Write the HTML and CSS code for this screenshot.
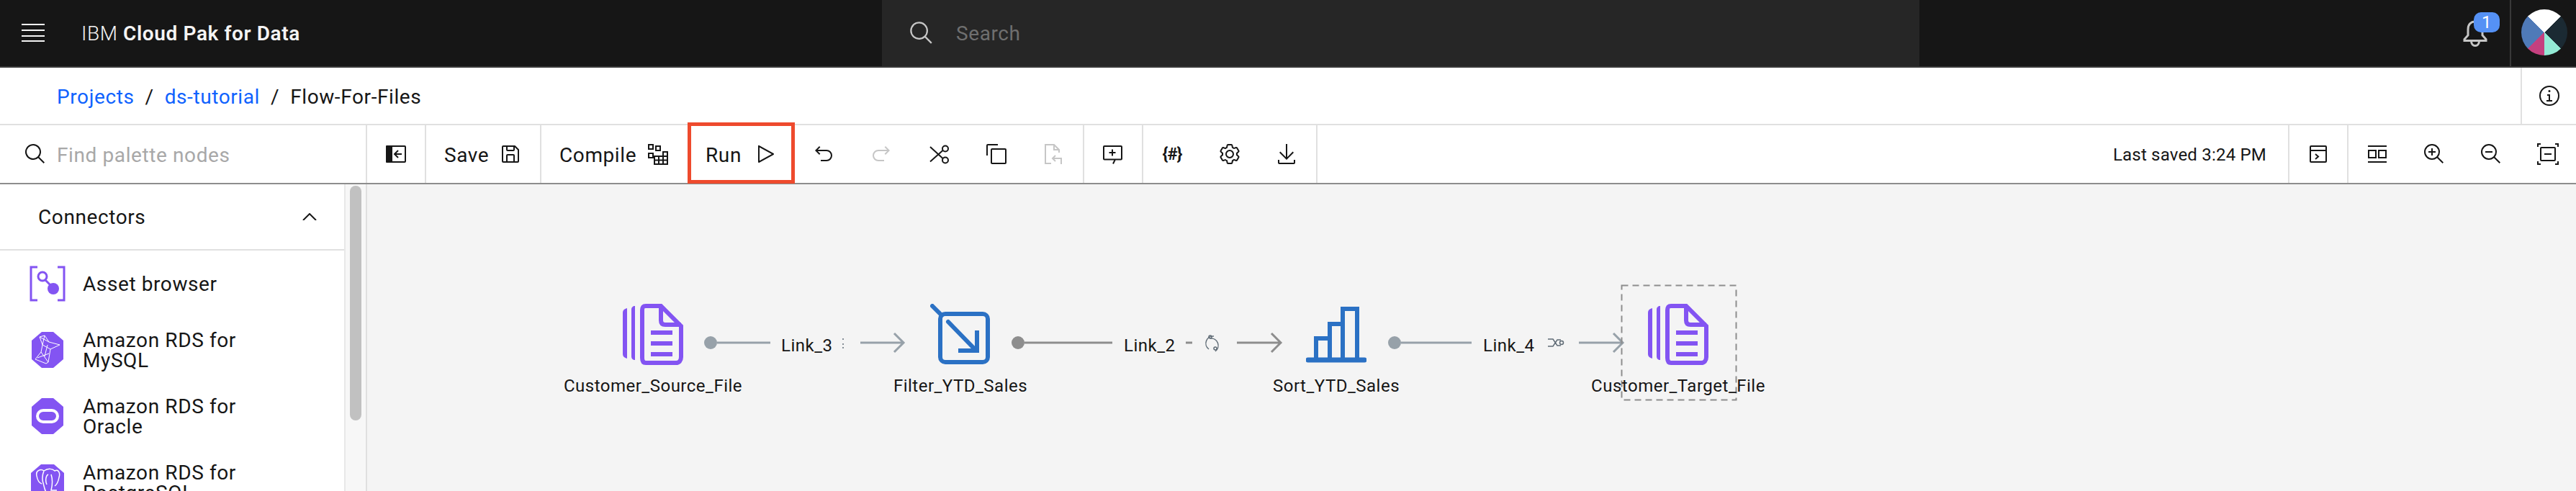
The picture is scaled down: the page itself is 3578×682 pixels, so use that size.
FILE: index.html
```html
<!DOCTYPE html>
<html lang="en">
<head>
    <meta charset="UTF-8">
    <title>Flow-For-Files</title>
    <link rel="stylesheet" href="styles.css">
</head>
<body>
    <header class="top-bar">
        <div class="top-left">
            <div class="menu-btn">
                <svg width="32" height="26" viewBox="0 0 32 26" fill="#f4f4f4"><rect y="0" width="32" height="2"/><rect y="8" width="32" height="2"/><rect y="16" width="32" height="2"/><rect y="23" width="32" height="2"/></svg>
            </div>
            <div class="product">IBM <strong>Cloud Pak for Data</strong></div>
        </div>
        <div class="top-search">
            <svg class="icon search-icon" viewBox="0 0 32 32" fill="#c6c6c6"><path d="M29 27.586l-7.552-7.552a11.018 11.018 0 10-1.414 1.414L27.586 29zM4 13a9 9 0 119 9 9.01 9.01 0 01-9-9z"/></svg>
            <span>Search</span>
        </div>
        <div class="top-right">
            <div class="bell">
                <svg width="34" height="38" viewBox="0 0 34 38" fill="none" stroke="#c6c6c6" stroke-width="3"><path d="M2 28.500V26.500L7 21V13C7 6 11 2 17 2S27 6 27 13V21L32 26.500V28.500Z"/><path d="M11.500 29C11.500 33 14 35.500 17 35.500S22.500 33 22.500 29"/></svg>
                <span class="badge">1</span>
            </div>
            <div class="avatar-box"><div class="avatar"></div></div>
        </div>
    </header>

    <nav class="crumbs">
        <div class="crumb-list">
            <a href="#">Projects</a>
            <span class="sep">/</span>
            <a href="#">ds-tutorial</a>
            <span class="sep">/</span>
            <span>Flow-For-Files</span>
        </div>
        <div class="info-btn">
            <svg class="icon" viewBox="0 0 32 32" fill="#161616"><path d="M17 22v-8h-4v2h2v6h-3v2h8v-2h-3z"/><path d="M16 8a1.500 1.500 0 101.500 1.500A1.500 1.500 0 0016 8z"/><path d="M16 30a14 14 0 1114-14 14 14 0 01-14 14zm0-26a12 12 0 1012 12A12 12 0 0016 4z"/></svg>
        </div>
    </nav>

    <div class="toolbar">
        <div class="palette-search">
            <svg class="icon" viewBox="0 0 32 32" fill="#161616"><path d="M29 27.586l-7.552-7.552a11.018 11.018 0 10-1.414 1.414L27.586 29zM4 13a9 9 0 119 9 9.01 9.01 0 01-9-9z"/></svg>
            <span>Find palette nodes</span>
        </div>
        <div class="tool toggle">
            <svg class="icon" viewBox="0 0 32 32"><path fill="#161616" d="M3 4H11V28H3a1 1 0 01-1-1V5a1 1 0 011-1z"/><path fill="none" stroke="#161616" stroke-width="2" d="M11 5H28a1 1 0 011 1V26a1 1 0 01-1 1H11"/><path fill="none" stroke="#161616" stroke-width="2" d="M24 16H15M19 11L14 16L19 21"/></svg>
        </div>
        <div class="text-tool save">
            <span>Save</span>
            <svg class="icon" viewBox="0 0 32 32" fill="#161616"><path d="M27.710 9.290l-5-5A1 1 0 0022 4H6a2 2 0 00-2 2v20a2 2 0 002 2h20a2 2 0 002-2V10a1 1 0 00-.290-.710zM12 6h8v4h-8zm8 20h-8v-8h8zm2 0v-8a2 2 0 00-2-2h-8a2 2 0 00-2 2v8H6V6h4v4a2 2 0 002 2h8a2 2 0 002-2V6.410l4 4V26z"/></svg>
        </div>
        <div class="text-tool compile">
            <span>Compile</span>
            <svg class="icon" viewBox="0 0 32 32" fill="none" stroke="#161616" stroke-width="2"><path d="M3 3h6v6H3zM13 5h6v6h-6zM3 15h6v6H3zM11 19h18v11H11zM23 13h6v17h-6zM17 19v11M11 24.500h18"/></svg>
        </div>
        <div class="text-tool run">
            <span>Run</span>
            <svg class="icon" viewBox="0 0 32 32" fill="#161616"><path d="M7 28a1 1 0 01-1-1V5a1 1 0 011.480-.880l20 11a1 1 0 010 1.760l-20 11A1 1 0 017 28zM8 6.690v18.620L24.930 16z"/></svg>
        </div>
        <div class="tool">
            <svg class="icon" viewBox="0 0 32 32" fill="#161616"><path d="M20 10H7.815l3.587-3.586L10 5l-6 6 6 6 1.402-1.415L7.818 12H20a6 6 0 010 12h-8v2h8a8 8 0 000-16z"/></svg>
        </div>
        <div class="tool">
            <svg class="icon" viewBox="0 0 32 32" fill="#c6c6c6"><path d="M12 10h12.185l-3.587-3.586L22 5l6 6-6 6-1.402-1.415L24.182 12H12a6 6 0 000 12h8v2h-8a8 8 0 010-16z"/></svg>
        </div>
        <div class="tool">
            <svg class="icon" viewBox="0 0 32 32" fill="none" stroke="#161616" stroke-width="2"><circle cx="25" cy="8.500" r="4"/><circle cx="25" cy="24.500" r="4"/><path d="M4 6L21.500 22M4 26.500L21.500 11"/></svg>
        </div>
        <div class="tool">
            <svg class="icon" viewBox="0 0 32 32" fill="#161616"><path d="M28 10v18H10V10h18m0-2H10a2 2 0 00-2 2v18a2 2 0 002 2h18a2 2 0 002-2V10a2 2 0 00-2-2z"/><path d="M4 18H2V4a2 2 0 012-2h14v2H4z"/></svg>
        </div>
        <div class="tool end">
            <svg class="icon" viewBox="0 0 32 32" fill="none" stroke="#c6c6c6" stroke-width="2"><path d="M13 29H5V3H17L24 10V14M17 3V10H24M27 30V22H15M19 18L15 22L19 26"/></svg>
        </div>
        <div class="tool end">
            <svg class="icon" viewBox="0 0 32 32" fill="none" stroke="#161616" stroke-width="2"><path d="M18 23.500H28a1 1 0 001-1V6a1 1 0 00-1-1H5a1 1 0 00-1 1V22.500a1 1 0 001 1H20L17 29.500"/><path d="M16 9.500V18.500M11.500 14H20.500"/></svg>
        </div>
        <div class="tool"><span class="code-icon">{#}</span></div>
        <div class="tool">
            <svg class="icon" viewBox="0 0 32 32" fill="#161616"><path d="M27 16.760V16v-.770l1.920-1.680A2 2 0 0029.300 11l-2.360-4a2 2 0 00-1.730-1 2 2 0 00-.640.100l-2.430.820a11.350 11.350 0 00-1.310-.750l-.510-2.520a2 2 0 00-2-1.610h-4.680a2 2 0 00-2 1.610l-.510 2.520a11.480 11.480 0 00-1.320.750l-2.380-.860A2 2 0 006.790 6a2 2 0 00-1.730 1L2.700 11a2 2 0 00.410 2.510L5 15.240v1.530l-1.890 1.680A2 2 0 002.700 21l2.360 4a2 2 0 001.730 1 2 2 0 00.640-.100l2.430-.820a11.350 11.350 0 001.310.750l.510 2.520a2 2 0 002 1.610h4.720a2 2 0 002-1.610l.510-2.520a11.480 11.480 0 001.320-.750l2.420.820a2 2 0 00.640.100 2 2 0 001.730-1l2.280-4a2 2 0 00-.410-2.510zM25.210 24l-3.430-1.160a8.860 8.860 0 01-2.710 1.570L18.360 28h-4.720l-.710-3.550a9.360 9.360 0 01-2.700-1.570L6.790 24l-2.360-4 2.720-2.400a8.900 8.900 0 010-3.130L4.430 12l2.360-4 3.430 1.160a8.860 8.860 0 012.710-1.570L13.640 4h4.720l.710 3.550a9.360 9.360 0 012.700 1.570L25.210 8l2.360 4-2.720 2.400a8.900 8.900 0 010 3.130L27.570 20z"/><path d="M16 22a6 6 0 116-6 5.940 5.940 0 01-6 6zm0-10a3.910 3.910 0 00-4 4 3.910 3.910 0 004 4 3.910 3.910 0 004-4 3.910 3.910 0 00-4-4z"/></svg>
        </div>
        <div class="tool end">
            <svg class="icon" viewBox="0 0 32 32" fill="#161616"><path d="M26 24v4H6v-4H4v4a2 2 0 002 2h20a2 2 0 002-2v-4z"/><path d="M26 14l-1.410-1.410L17 20.170V2h-2v18.170l-7.590-7.580L6 14l10 10 10-10z"/></svg>
        </div>
        <div class="saved">Last saved 3:24 PM</div>
        <div class="tool console">
            <svg class="icon" viewBox="0 0 32 32" fill="none" stroke="#161616" stroke-width="2"><rect x="5" y="5" width="22" height="22" rx="1"/><path d="M5 11H27M12 16L16 19.500L12 23"/></svg>
        </div>
        <div class="view-tools">
            <div class="tool view">
                <svg class="icon" viewBox="0 0 32 32" fill="none" stroke="#161616" stroke-width="2"><path d="M3 5H29M3 27H29"/><rect x="4" y="11" width="10" height="10"/><rect x="18" y="11" width="10" height="10"/></svg>
            </div>
            <div class="tool view">
                <svg class="icon" viewBox="0 0 32 32" fill="#161616"><path d="M18 12h-4V8h-2v4H8v2h4v4h2v-4h4v-2z"/><path d="M21.448 20A10.856 10.856 0 0024 13a11 11 0 10-11 11 10.856 10.856 0 007-2.552L27.586 29 29 27.586zM13 22a9 9 0 119-9 9.010 9.010 0 01-9 9z"/></svg>
            </div>
            <div class="tool view">
                <svg class="icon" viewBox="0 0 32 32" fill="#161616"><path d="M8 12h10v2H8z"/><path d="M21.448 20A10.856 10.856 0 0024 13a11 11 0 10-11 11 10.856 10.856 0 007-2.552L27.586 29 29 27.586zM13 22a9 9 0 119-9 9.010 9.010 0 01-9 9z"/></svg>
            </div>
            <div class="tool view">
                <svg class="icon" viewBox="0 0 32 32" fill="none" stroke="#161616" stroke-width="2"><path d="M6 2H2V6M26 2H30V6M2 26V30H6M30 26V30H26"/><rect x="6" y="7" width="20" height="18" rx="1"/><path d="M11 16H21"/></svg>
            </div>
        </div>
    </div>

    <main class="workspace">
        <aside class="palette">
            <div class="palette-head">
                <span>Connectors</span>
                <svg width="20" height="10" viewBox="0 0 20 10" fill="none" stroke="#161616" stroke-width="2"><path d="M1 10L10 1L19 10"/></svg>
            </div>
            <div class="palette-item">
                <div class="item-icon">
                    <svg width="50" height="50" viewBox="0 0 50 50" fill="none" stroke="#8354f2" stroke-width="3"><path d="M11 2H2V48H11M39 2H48V48H39"/><circle cx="18" cy="15" r="6"/><path d="M22 20L30 28"/><circle cx="33" cy="32" r="8" fill="#8354f2" stroke="none"/></svg>
                </div>
                <span>Asset browser</span>
            </div>
            <div class="palette-item">
                <div class="item-icon">
                    <svg width="44" height="50" viewBox="0 0 44 50"><path fill="#8354f2" d="M14 0H30L44 12V38L30 50H14L0 38V12Z"/><path fill="none" stroke="#fff" stroke-width="1" d="M11 7L18 5L24 14L39 18L26 24L23 42L20 44L5 38L13 28L15 18ZM11 7L24 14M15 18L26 24M13 28L23 42M18 5L15 18M22 18L18 34M8 36L24 30"/></svg>
                </div>
                <span>Amazon RDS for<br>MySQL</span>
            </div>
            <div class="palette-item">
                <div class="item-icon">
                    <svg width="44" height="50" viewBox="0 0 44 50"><path fill="#8354f2" d="M14 0H30L44 12V38L30 50H14L0 38V12Z"/><rect x="8" y="17" width="28" height="16" rx="8" fill="none" stroke="#fff" stroke-width="4"/></svg>
                </div>
                <span>Amazon RDS for<br>Oracle</span>
            </div>
            <div class="palette-item">
                <div class="item-icon">
                    <svg width="46" height="50" viewBox="0 0 46 50"><path fill="#8354f2" d="M14 0H32L46 12V38L32 50H14L0 38V12Z"/><path fill="none" stroke="#fff" stroke-width="1.500" d="M8 16C6 8 14 6 18 9C24 5 30 6 33 9C38 6 41 12 39 18C38 24 36 28 33 30M8 16C9 22 12 26 15 27M18 9C16 14 15 20 17 26C19 34 20 40 24 42M24 14C20 16 20 24 22 28M28 14C30 20 30 28 28 36L36 36"/></svg>
                </div>
                <span>Amazon RDS for<br>PostgreSQL</span>
            </div>
        </aside>
        <div class="scroll-track"><div class="scroll-thumb"></div></div>

        <section class="canvas">
            <svg class="links" width="3068" height="426" viewBox="0 0 3068 426" fill="none">
                <g stroke="#97a1a9" stroke-width="3">
                    <circle cx="477" cy="220" r="9" fill="#97a1a9" stroke="none"/>
                    <path d="M486 220H560M685 220H746M732 207L745 220L732 233"/>
                    <circle cx="1427" cy="220" r="9" fill="#97a1a9" stroke="none"/>
                    <path d="M1436 220H1534M1683 220H1744M1731 207L1744 220L1731 233"/>
                </g>
                <g stroke="#8d8d8d" stroke-width="3">
                    <circle cx="904" cy="220" r="9" fill="#8d8d8d" stroke="none"/>
                    <path d="M913 220H1035M1137 220H1146M1208 220H1269M1256 207L1269 220L1256 233"/>
                </g>
                <g stroke="#5f6b75" stroke-width="1.500">
                    <path d="M661 214V216M661 221V223M661 226V228"/>
                    <path d="M1640 215H1647L1653 224H1658M1640 225H1647L1653 216H1658"/>
                    <circle cx="1659" cy="220" r="2.500"/>
                    <path d="M1176 211A10 10 0 0 0 1169 229M1171 214A10 10 0 0 1 1178 232"/>
                    <circle cx="1171" cy="212" r="2"/>
                    <circle cx="1178" cy="228" r="2"/>
                </g>
                <rect class="dash-box" x="1742.500" y="140.500" width="159" height="159" stroke="#8d8d8d" stroke-width="2" stroke-dasharray="9 6"/>
            </svg>

            <span class="link-label label-3">Link_3</span>
            <span class="link-label label-2">Link_2</span>
            <span class="link-label label-4">Link_4</span>

            <div class="node source">
                <svg width="84" height="85" viewBox="0 0 84 85" fill="#8354f2"><path d="M6 6V76C2 75 0 73 0 70V12C0 9 2 7 6 6ZM17 3V78C14 78 12 76 12 73V8C12 5 14 3 17 3Z"/><path fill="none" stroke="#8354f2" stroke-width="6" d="M32 3H53L81 31V74C81 79 78 82 74 82H32C28 82 27 79 27 75V9C27 5 28 3 32 3ZM53 3V23C53 27 55 29 59 29H81"/><path d="M39 37H69V43H39ZM39 52H69V58H39ZM39 67H69V73H39Z"/></svg>
                <span>Customer_Source_File</span>
            </div>
            <div class="node filter">
                <svg width="84" height="85" viewBox="0 0 84 85" fill="none" stroke="#2b71c4" stroke-width="6"><rect x="14" y="14" width="66" height="67" rx="7"/><path d="M3 3L16 16M25 25L61 62" stroke-linecap="round"/><path d="M65 37V65H39" fill="none"/></svg>
                <span>Filter_YTD_Sales</span>
            </div>
            <div class="node sort">
                <svg width="84" height="85" viewBox="0 0 84 85" fill="none" stroke="#2b71c4" stroke-width="6"><path d="M14 78V48H33V78M33 78V28H51V78M51 78V7H71V78"/><path d="M3 78H81" stroke-width="7" stroke-linecap="round"/></svg>
                <span>Sort_YTD_Sales</span>
            </div>
            <div class="node target">
                <svg width="84" height="85" viewBox="0 0 84 85" fill="#8354f2"><path d="M6 6V76C2 75 0 73 0 70V12C0 9 2 7 6 6ZM17 3V78C14 78 12 76 12 73V8C12 5 14 3 17 3Z"/><path fill="none" stroke="#8354f2" stroke-width="6" d="M32 3H53L81 31V74C81 79 78 82 74 82H32C28 82 27 79 27 75V9C27 5 28 3 32 3ZM53 3V23C53 27 55 29 59 29H81"/><path d="M39 37H69V43H39ZM39 52H69V58H39ZM39 67H69V73H39Z"/></svg>
                <span>Customer_Target_File</span>
            </div>
        </section>
    </main>
</body>
</html>
```

FILE: styles.css
```css
* {
    box-sizing: border-box;
}

html, body {
    height: 100%;
}

body {
    margin: 0;
    display: flex;
    flex-direction: column;
    overflow: hidden;
    font-family: "Roboto", "Liberation Sans", sans-serif;
    font-size: 28px;
    letter-spacing: 0.6px;
    color: #161616;
    background-color: #fff;
}

.icon {
    width: 32px;
    height: 32px;
    flex-shrink: 0;
}

/* Top bar */
.top-bar {
    display: flex;
    flex-shrink: 0;
    height: 94px;
    border-bottom: 2px solid #393939;
    background-color: #161616;
    color: #f4f4f4;
}

.top-left {
    display: flex;
    align-items: center;
    width: 1225px;
}

.menu-btn {
    display: flex;
    align-items: center;
    justify-content: center;
    width: 92px;
}

.product {
    margin-left: 21px;
    font-weight: 300;
}

.product strong {
    font-weight: 600;
}

.top-search {
    display: flex;
    align-items: center;
    gap: 30px;
    width: 1441px;
    padding-left: 37px;
    background-color: #262626;
    color: #6f6f6f;
}

.search-icon {
    width: 36px;
    height: 36px;
}

.top-right {
    display: flex;
    flex: 1;
    justify-content: flex-end;
}

.bell {
    position: relative;
    margin: 28px 31px 0 0;
    width: 34px;
    height: 38px;
}

.badge {
    position: absolute;
    left: 15px;
    top: -11px;
    width: 36px;
    height: 28px;
    border-radius: 10px;
    background-color: #5591f5;
    color: #fff;
    font-size: 24px;
    line-height: 28px;
    text-align: center;
}

.avatar-box {
    width: 92px;
    padding: 13px 0 0 14px;
    border-left: 2px solid #393939;
}

.avatar {
    width: 64px;
    height: 64px;
    border-radius: 50%;
    background: conic-gradient(#fff 0 45deg, #1b2a33 45deg 135deg, #93ead5 135deg 180deg, #c5407f 180deg 225deg, #4f7ab8 225deg 315deg, #fff 315deg);
}

/* Breadcrumbs */
.crumbs {
    display: flex;
    flex-shrink: 0;
    justify-content: space-between;
    height: 78px;
}

.crumb-list {
    display: flex;
    align-items: center;
    padding: 2px 0 0 79px;
}

.crumb-list a {
    color: #0f62fe;
    text-decoration: none;
}

.sep {
    margin: 0 15px;
}

.info-btn {
    display: flex;
    align-items: center;
    justify-content: center;
    width: 77px;
    border-left: 2px solid #e0e0e0;
}

/* Toolbar */
.toolbar {
    display: flex;
    flex-shrink: 0;
    height: 84px;
    border-top: 2px solid #e0e0e0;
    border-bottom: 2px solid #8d8d8d;
}

.palette-search {
    display: flex;
    align-items: center;
    gap: 14px;
    width: 510px;
    padding-left: 33px;
    border-right: 2px solid #e0e0e0;
    color: #a8a8a8;
}

.palette-search span,
.text-tool span {
    padding-top: 2px;
}

.tool {
    display: flex;
    align-items: center;
    justify-content: center;
    width: 80px;
}

.tool.end {
    width: 82px;
    padding-right: 2px;
    border-right: 2px solid #e0e0e0;
}

.tool.toggle {
    width: 82px;
    border-right: 2px solid #e0e0e0;
}

.tool.console {
    width: 84px;
    border-left: 2px solid #e0e0e0;
    border-right: 2px solid #e0e0e0;
}

.text-tool {
    display: flex;
    align-items: center;
    justify-content: space-between;
    padding: 0 25px;
}

.text-tool.save {
    width: 160px;
    border-right: 2px solid #e0e0e0;
}

.text-tool.compile {
    width: 203px;
}

.text-tool.run {
    position: relative;
    width: 149px;
}

.text-tool.run::after {
    content: "";
    position: absolute;
    top: -4px;
    right: 0;
    bottom: -1px;
    left: 0;
    border: 5px solid #ee4a2d;
}

.code-icon {
    font-size: 24px;
    font-weight: 700;
    letter-spacing: -1px;
}

.saved {
    display: flex;
    align-items: center;
    margin-left: auto;
    padding: 2px 30px 0 0;
    font-size: 24px;
    letter-spacing: 0.2px;
}

.view-tools {
    display: flex;
}

.tool.view {
    width: 79px;
}

/* Main area */
.workspace {
    display: flex;
    flex: 1;
    min-height: 0;
}

.palette {
    width: 478px;
    overflow: hidden;
    flex-shrink: 0;
    line-height: 28px;
}

.palette-head {
    display: flex;
    align-items: center;
    justify-content: space-between;
    height: 92px;
    padding: 0 38px 0 53px;
    border-bottom: 2px solid #e0e0e0;
}

.palette-item {
    display: flex;
    align-items: center;
    gap: 24px;
    height: 92px;
    padding-left: 41px;
}

.palette-head span,
.palette-item span {
    padding-top: 2px;
}

.item-icon {
    display: flex;
    justify-content: center;
    width: 50px;
}

.scroll-track {
    width: 32px;
    flex-shrink: 0;
    padding: 2px 6px;
    border-left: 2px solid #e8e8e8;
    border-right: 2px solid #e0e0e0;
    background-color: #f7f7f7;
}

.scroll-thumb {
    width: 16px;
    height: 326px;
    border-radius: 8px;
    background-color: #c1c1c1;
}

.canvas {
    position: relative;
    flex: 1;
    overflow: hidden;
    background-color: #f4f4f4;
    font-size: 24px;
    letter-spacing: 0.5px;
    line-height: 32px;
}

.links {
    position: absolute;
    left: 0;
    top: 0;
}

.link-label {
    position: absolute;
    top: 208px;
}

.label-3 {
    left: 575px;
}

.label-2 {
    left: 1051px;
}

.label-4 {
    left: 1550px;
}

.node {
    position: absolute;
    top: 166px;
    display: flex;
    flex-direction: column;
    align-items: center;
    gap: 13px;
    width: 280px;
    white-space: nowrap;
}

.node svg {
    display: block;
}

.source {
    left: 257px;
}

.filter {
    left: 684px;
}

.sort {
    left: 1206px;
}

.target {
    left: 1681px;
}
```
